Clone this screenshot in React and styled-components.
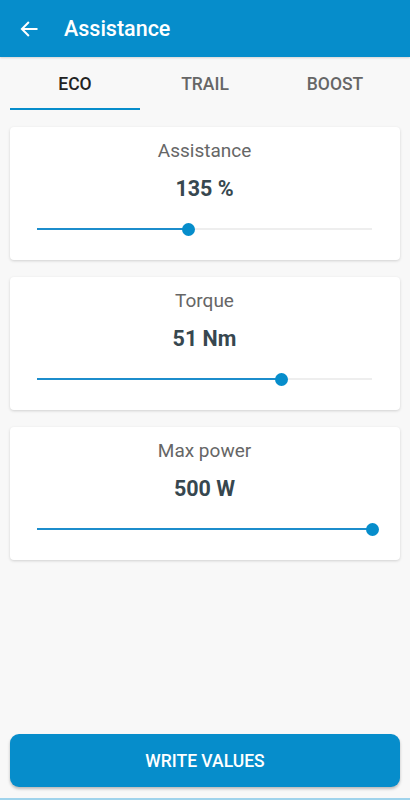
import styled, { createGlobalStyle } from "styled-components";
import { useState } from "react";

const GlobalStyle = createGlobalStyle`
  html, body {
    margin: 0;
    padding: 0;
    background: #f8f8f8;
    font-family: Roboto, "Noto Sans", "Liberation Sans", sans-serif;
  }
  * { box-sizing: border-box; }
`;

const BLUE = "#068dcb";

const Styled = {
  Page: styled.div`
    height: 800px;
    display: flex;
    flex-direction: column;
    background: #f8f8f8;
  `,
  Header: styled.header`
    height: 57px;
    background: ${BLUE};
    display: flex;
    align-items: center;
    padding-left: 19px;
    gap: 25px;
    color: #fff;
    box-shadow: 0 1px 2px rgba(0, 0, 0, 0.15);
  `,
  BackButton: styled.button`
    border: none;
    background: none;
    padding: 0;
    display: flex;
    color: #fff;
    cursor: pointer;
  `,
  Title: styled.h1`
    margin: 0;
    font-size: 21.5px;
    font-weight: 500;
  `,
  Tabs: styled.nav`
    display: grid;
    grid-template-columns: repeat(3, 1fr);
    margin: 0 10px;
    height: 53px;
  `,
  Tab: styled.button`
    border: none;
    background: none;
    font-family: inherit;
    font-size: 17.5px;
    font-weight: 500;
    color: ${({ $active }) => ($active ? "#222" : "#666")};
    border-bottom: 2px solid ${({ $active }) => ($active ? BLUE : "transparent")};
    padding: 2px 0 0;
    cursor: pointer;
  `,
  Content: styled.main`
    flex: 1;
    display: flex;
    flex-direction: column;
    gap: 17px;
    padding: 17px 10px 0;
  `,
  Card: styled.section`
    background: #fff;
    border-radius: 4px;
    box-shadow: 0 1px 3px rgba(0, 0, 0, 0.16);
    padding: 13px 28px 24px 27px;
    display: flex;
    flex-direction: column;
    align-items: center;
  `,
  CardTitle: styled.div`
    font-size: 19px;
    line-height: 22px;
    color: #666;
  `,
  Value: styled.div`
    margin-top: 14px;
    font-size: 21.5px;
    line-height: 26px;
    font-weight: 700;
    color: #37474f;
  `,
  Slider: styled.div`
    position: relative;
    margin-top: 20px;
    height: 14px;
    width: 100%;
    display: flex;
    align-items: center;
  `,
  Track: styled.div`
    width: 100%;
    height: 2px;
    background: #eeeeee;
    display: flex;
  `,
  Fill: styled.div`
    height: 2px;
    background: #1c8dcc;
  `,
  Thumb: styled.div`
    position: absolute;
    top: 1px;
    width: 13px;
    height: 13px;
    margin-left: -6.5px;
    border-radius: 50%;
    background: ${BLUE};
  `,
  Footer: styled.footer`
    padding: 0 10px 11px;
    border-bottom: 2px solid #9fd3ec;
  `,
  WriteButton: styled.button`
    width: 100%;
    height: 53px;
    border: none;
    border-radius: 9px;
    background: ${BLUE};
    color: #fff;
    font-family: inherit;
    font-size: 17.5px;
    font-weight: 500;
    box-shadow: 0 2px 3px rgba(0, 0, 0, 0.25);
    cursor: pointer;
  `,
};

const settings = [
  { title: "Assistance", value: "135 %", ratio: 0.452 },
  { title: "Torque", value: "51 Nm", ratio: 0.73 },
  { title: "Max power", value: "500 W", ratio: 1 },
];

function SettingCard({ title, value, ratio }) {
  const pct = `${ratio * 100}%`;
  return (
    <Styled.Card>
      <Styled.CardTitle>{title}</Styled.CardTitle>
      <Styled.Value>{value}</Styled.Value>
      <Styled.Slider>
        <Styled.Track>
          <Styled.Fill style={{ width: pct }} />
        </Styled.Track>
        <Styled.Thumb style={{ left: pct }} />
      </Styled.Slider>
    </Styled.Card>
  );
}

export default function App() {
  const [tab, setTab] = useState("ECO");
  return (
    <>
      <GlobalStyle />
      <Styled.Page>
        <Styled.Header>
          <Styled.BackButton aria-label="Back">
            <svg width="20" height="20" viewBox="0 0 24 24" fill="none" stroke="currentColor" strokeWidth="2.4" strokeLinecap="square">
              <path d="M21 12H4M11 4.5L3.5 12l7.5 7.5" />
            </svg>
          </Styled.BackButton>
          <Styled.Title>Assistance</Styled.Title>
        </Styled.Header>
        <Styled.Tabs>
          {["ECO", "TRAIL", "BOOST"].map((t) => (
            <Styled.Tab key={t} $active={tab === t} onClick={() => setTab(t)}>
              {t}
            </Styled.Tab>
          ))}
        </Styled.Tabs>
        <Styled.Content>
          {settings.map((s) => (
            <SettingCard key={s.title} {...s} />
          ))}
        </Styled.Content>
        <Styled.Footer>
          <Styled.WriteButton>WRITE VALUES</Styled.WriteButton>
        </Styled.Footer>
      </Styled.Page>
    </>
  );
}
